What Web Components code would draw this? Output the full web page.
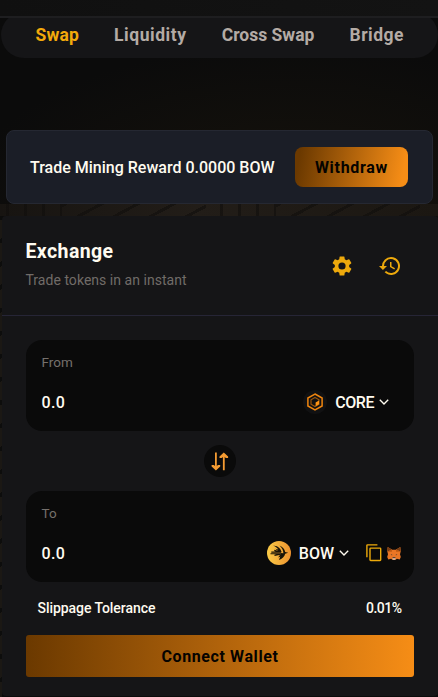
<!DOCTYPE html>
<html lang="en">
<head>
<meta charset="utf-8">
<title>Exchange</title>
<style>
  html, body { margin: 0; height: 100%; overflow: hidden; }
  body {
    background: #0b0b0b;
    color: #fffbf0;
    font-family: Roboto, "Noto Sans", sans-serif;
  }
</style>
</head>
<body>
<swap-app></swap-app>

<script>
const define = (name, html) => {
  const template = document.createElement('template');
  template.innerHTML = html;
  window.customElements.define(name, class extends HTMLElement {
    constructor() {
      super();
      this.attachShadow({ mode: 'open' });
      this.shadowRoot.appendChild(template.content.cloneNode(true));
    }
  });
};

const icons = {
  cog: ['0 0 24 24', '<path fill="currentColor" d="M19.14 12.94c.04-.3.06-.61.06-.94 0-.32-.02-.64-.07-.94l2.03-1.58a.49.49 0 0 0 .12-.61l-1.92-3.32a.49.49 0 0 0-.59-.22l-2.39.96c-.5-.38-1.03-.7-1.62-.94L14.4 2.81a.48.48 0 0 0-.48-.41h-3.84a.47.47 0 0 0-.47.41L9.25 5.35c-.59.24-1.13.57-1.62.94l-2.39-.96a.48.48 0 0 0-.59.22L2.74 8.87a.48.48 0 0 0 .12.61l2.03 1.58c-.05.3-.09.63-.09.94s.02.64.07.94l-2.03 1.58a.49.49 0 0 0-.12.61l1.92 3.32c.12.22.37.29.59.22l2.39-.96c.5.38 1.03.7 1.62.94l.36 2.54c.05.24.24.41.48.41h3.84c.24 0 .44-.17.47-.41l.36-2.54c.59-.24 1.13-.56 1.62-.94l2.39.96c.22.08.47 0 .59-.22l1.92-3.32a.48.48 0 0 0-.12-.61zM12 15.6A3.6 3.6 0 1 1 12 8.4a3.6 3.6 0 0 1 0 7.2z"/>'],
  history: ['0 0 24 24', '<path fill="currentColor" d="M13 3a9 9 0 0 0-9 9H1l3.89 3.89.07.14L9 12H6a7 7 0 1 1 2.06 4.94l-1.42 1.42A9 9 0 1 0 13 3zm-1 5v5l4.28 2.54.72-1.21-3.5-2.08V8z"/>'],
  chevron: ['0 0 10 6', '<path fill="none" stroke="currentColor" stroke-width="1.4" d="M.8.8 5 4.9 9.2.8"/>'],
  copy: ['0 0 16 18', '<path fill="none" stroke="currentColor" stroke-width="1.4" d="M.9 13.2V1.5Q.9.9 1.5.9H11.4M4.7 4.1H14q.7 0 .7.7v11q0 .7-.7.7H4.7q-.7 0-.7-.7v-11q0-.7.7-.7z"/>'],
  arrows: ['0 0 18 19', '<path fill="none" stroke="currentColor" stroke-width="1.8" d="M4.9.5V16M12.8 3v15.3"/><path fill="currentColor" d="M.6 12.9h2.1l2.2 1.6 2.2-1.6h2.1v1.6l-4.3 3.9L.6 14.5zM8.5 6.1h2.1l2.2-1.6L15 6.1h2.1V4.5L12.8.6 8.5 4.5z"/>'],
  core: ['0 0 24 24', '<circle cx="12" cy="12" r="12" fill="#111112"/><path fill="none" stroke="#ef850f" stroke-width="1.5" d="m12 4 7.1 4v8L12 20l-7.1-4V8z"/><path fill="none" stroke="#9b560d" stroke-width="1.2" d="m12 7.5 4 2.3v4.4l-4 2.3-4-2.3V9.8z"/><path fill="#ff9414" d="m12.6 12.4 3.4-1.8v3.6l-3.4 2z"/>'],
  bow: ['0 0 24 24', '<defs><linearGradient id="g"><stop stop-color="#fbcb47"/><stop offset="1" stop-color="#ed922f"/></linearGradient></defs><circle cx="12" cy="12" r="12" fill="url(#g)"/><path fill="#181307" d="M6.2 4.8c2.6-.3 4.4.6 5.8 2 1.5 1.4 2.2 2.8 2.5 4.2h-2.4L8.4 7.7l3 .9C10 6.600 8.500 5.500 6.200 4.800zM12.500 4.400c3.300 1.200 5.200 3.700 5.700 6.500l3 .9-3 .9c-.6 2.900-3 5.100-6.300 6.200l1.400-3.300-2.200.8 3.100-4.100h2.200c-.1-3.200-1.500-5.700-3.900-7.900z"/><path fill="none" stroke="#181307" stroke-width="1.100" d="M4.300 11.100h9.900M3.500 12.700h12M7.500 14.400l6-1.300M7.300 9.400l5.200 1.500"/>'],
  fox: ['0 0 14 13', '<path fill="#e97625" d="m.7 0 4.500 2.800h3.600L13.300 0l.5 4-.8 3.200.8 2.700-1.100 2.700-2.800-.8-1.700 1.100H5.800l-1.700-1.100-2.800.8L.2 9.900 1 7.200.2 4z"/><path fill="#763d16" d="m.7 0 4 2.600-3.800 1.900L.3 3.700zM13.300 0l-4 2.600 3.800 1.900.6-.8z"/><path fill="#b8560f" d="m.9 4.500 3.800-1.900.2 2.200zM13.100 4.500 9.300 2.600l-.2 2.200z"/><path fill="#29323b" d="m3.600 7.100 1.700.7-.3.800zM10.400 7.100l-1.700.7.300.8zM5.700 10.300h2.600l.3 1H5.400z"/><path fill="#c9bcb0" d="M5.200 11.300h3.600l-.7 1.500H5.900z"/>']
};

// <app-icon name="cog"> takes its size from the element around it
window.customElements.define('app-icon', class extends HTMLElement {
  constructor() {
    super();
    this.attachShadow({ mode: 'open' });
  }

  connectedCallback() {
    const [viewBox, shapes] = icons[this.getAttribute('name')];
    this.shadowRoot.innerHTML = `
      <style>
        :host { display: block; flex: none; }
        svg { display: block; width: 100%; height: 100%; }
      </style>
      <svg viewBox="${viewBox}" aria-hidden="true">${shapes}</svg>
    `;
  }
});

define('gradient-button', `
  <style>
    :host {
      display: block;
      flex: none;
      box-sizing: border-box;
      border-radius: 8px;
      background: linear-gradient(90deg, #6b3900, #f68d16);
      color: #050300;
    }
    button {
      width: 100%;
      height: 100%;
      padding: 2px 0 0;
      border: 0;
      background: none;
      color: inherit;
      font: inherit;
      letter-spacing: inherit;
    }
  </style>
  <button><slot></slot></button>
`);

define('nav-tabs', `
  <style>
    :host {
      display: flex;
      box-sizing: border-box;
      height: 46px;
      margin: -6px 0 0 1px;
      padding: 13px 34px 0 34.5px;
      justify-content: space-between;
      border-radius: 23px;
      background: #151517;
      color: #b4aba5;
      font: 700 17.5px/20px Roboto, sans-serif;
    }
    ::slotted([active]) { color: #f2a90b; }
  </style>
  <slot></slot>
`);

define('reward-banner', `
  <style>
    :host {
      display: flex;
      box-sizing: border-box;
      height: 74px;
      margin: 72px 5px 0 6px;
      padding: 0 24px 0 23px;
      align-items: center;
      justify-content: space-between;
      border: 1px solid #252832;
      border-radius: 8px;
      background: #1b1e27;
      font: 500 16px/20px Roboto, sans-serif;
    }
    ::slotted(span) { padding-top: 2px; }
    gradient-button {
      width: 113px;
      height: 40px;
      background: linear-gradient(100deg, #6b3900 5%, #f68d16 94%);
      font-weight: 700;
      letter-spacing: .7px;
    }
  </style>
  <slot></slot>
  <gradient-button>Withdraw</gradient-button>
`);

define('card-header', `
  <style>
    :host {
      display: flex;
      box-sizing: border-box;
      height: 100px;
      padding: 24px 36px 0 23.5px;
      justify-content: space-between;
      border-bottom: 1px solid #262536;
    }
    h2 { margin: 0; font: 700 19.5px/24px Roboto, sans-serif; letter-spacing: .4px; }
    p { margin: 6px 0 0; color: #716c68; font: 400 14px/20px Roboto, sans-serif; letter-spacing: .03px; }
    .tools { display: flex; gap: 24px; padding-top: 14px; color: #eda90c; }
    app-icon { width: 24px; height: 24px; }
  </style>
  <div>
    <h2><slot></slot></h2>
    <p><slot name="note"></slot></p>
  </div>
  <div class="tools">
    <app-icon name="cog"></app-icon>
    <app-icon name="history"></app-icon>
  </div>
`);

define('token-field', `
  <style>
    :host {
      display: block;
      box-sizing: border-box;
      height: 91px;
      padding: 12px 13px 0 15.5px;
      border-radius: 16px;
      background: #0a0a0a;
    }
    .label { color: #75706c; font: 400 13.5px/20px Roboto, sans-serif; }
    .row {
      display: flex;
      height: 24px;
      margin-top: 18px;
      align-items: center;
      justify-content: space-between;
      font: 500 16px/24px Roboto, sans-serif;
    }
    .amount { padding-top: 2px; letter-spacing: .3px; }
    .token { display: flex; align-items: center; }
  </style>
  <div class="label"><slot name="label"></slot></div>
  <div class="row">
    <span class="amount">0.0</span>
    <div class="token"><slot></slot></div>
  </div>
`);

define('token-select', `
  <style>
    :host { display: flex; height: 24px; align-items: center; }
    app-icon { width: 10px; height: 6px; margin-left: 5px; }
    slot { display: block; }
    .symbol { margin-left: 8px; padding-top: 2px; }
  </style>
  <slot name="logo"></slot>
  <span class="symbol"><slot></slot></span>
  <app-icon name="chevron"></app-icon>
`);

define('slippage-row', `
  <style>
    :host {
      display: flex;
      padding: 16px 12.5px 17px 11.5px;
      justify-content: space-between;
      font: 500 14px/20px Roboto, sans-serif;
      letter-spacing: -.06px;
    }
    ::slotted(:last-child) { letter-spacing: -.5px; }
  </style>
  <slot></slot>
`);

define('swap-card', `
  <style>
    :host {
      display: block;
      box-sizing: border-box;
      height: 480px;
      margin: 12px 0 0 2px;
      border-radius: 4px;
      background: #151517;
    }
    .body { padding: 24px 24px 0; }
    .switch {
      display: flex;
      width: 32px;
      height: 32px;
      margin: 14px auto;
      align-items: center;
      justify-content: center;
      border-radius: 50%;
      background: #0a0a0a;
      color: #f49b32;
    }
    .switch app-icon { width: 18px; height: 19px; }
    .logo { width: 24px; height: 24px; }
    .core { margin-right: 12px; letter-spacing: -.45px; }
    .copy { width: 16px; height: 18px; margin-left: 17px; color: #edaa0b; }
    .fox { width: 14px; height: 13px; margin-left: 5px; }
    .connect { height: 42px; border-radius: 3px; font: 700 16px/20px Roboto, sans-serif; letter-spacing: .6px; }
  </style>
  <card-header>Exchange<span slot="note">Trade tokens in an instant</span></card-header>
  <div class="body">
    <token-field>
      <span slot="label">From</span>
      <token-select class="core"><app-icon class="logo" slot="logo" name="core"></app-icon>CORE</token-select>
    </token-field>
    <div class="switch"><app-icon name="arrows"></app-icon></div>
    <token-field>
      <span slot="label">To</span>
      <token-select><app-icon class="logo" slot="logo" name="bow"></app-icon>BOW</token-select>
      <app-icon class="copy" name="copy"></app-icon>
      <app-icon class="fox" name="fox"></app-icon>
    </token-field>
    <slippage-row><span>Slippage Tolerance</span><span>0.01%</span></slippage-row>
    <gradient-button class="connect">Connect Wallet</gradient-button>
  </div>
`);

define('swap-app', `
  <style>
    :host {
      display: block;
      height: 697px;
      overflow: hidden;
      /* faint wooden beams show in the gap above the card and down its left edge */
      background:
        repeating-linear-gradient(90deg, #100e0c99 0 3px, transparent 3px 18px) 6px 204px / 56px 12px no-repeat,
        repeating-linear-gradient(90deg, #100e0c99 0 3px, transparent 3px 18px) 220px 204px / 56px 12px no-repeat,
        repeating-linear-gradient(152deg, #100e0c99 0 3px, transparent 3px 17px) 62px 204px / 144px 12px no-repeat,
        repeating-linear-gradient(152deg, #100e0c99 0 3px, transparent 3px 17px) 276px 204px / 144px 12px no-repeat,
        repeating-linear-gradient(150deg, #0d0d0c 0 4px, transparent 4px 20px) 0 216px / 2px 481px no-repeat,
        linear-gradient(90deg, #171411, #221d18 45%, #1b1712) 0 204px / 100% 12px no-repeat,
        linear-gradient(#1b1814, #1b1814) 0 216px / 2px 481px no-repeat,
        radial-gradient(ellipse 330px 160px at 290px 204px, #17130c, #0b0b0b);
    }
    header {
      position: relative;
      box-sizing: border-box;
      height: 18px;
      border-bottom: 2px solid #1e1e20;
      background: linear-gradient(90deg, #101010, #131313);
    }
    .swap { letter-spacing: .15px; }
    .liquidity { letter-spacing: .55px; }
    .bridge { letter-spacing: .5px; }
  </style>
  <header></header>
  <nav-tabs>
    <span class="swap" active>Swap</span>
    <span class="liquidity">Liquidity</span>
    <span>Cross Swap</span>
    <span class="bridge">Bridge</span>
  </nav-tabs>
  <reward-banner><span>Trade Mining Reward 0.0000 BOW</span></reward-banner>
  <swap-card></swap-card>
`);
</script>
</body>
</html>
